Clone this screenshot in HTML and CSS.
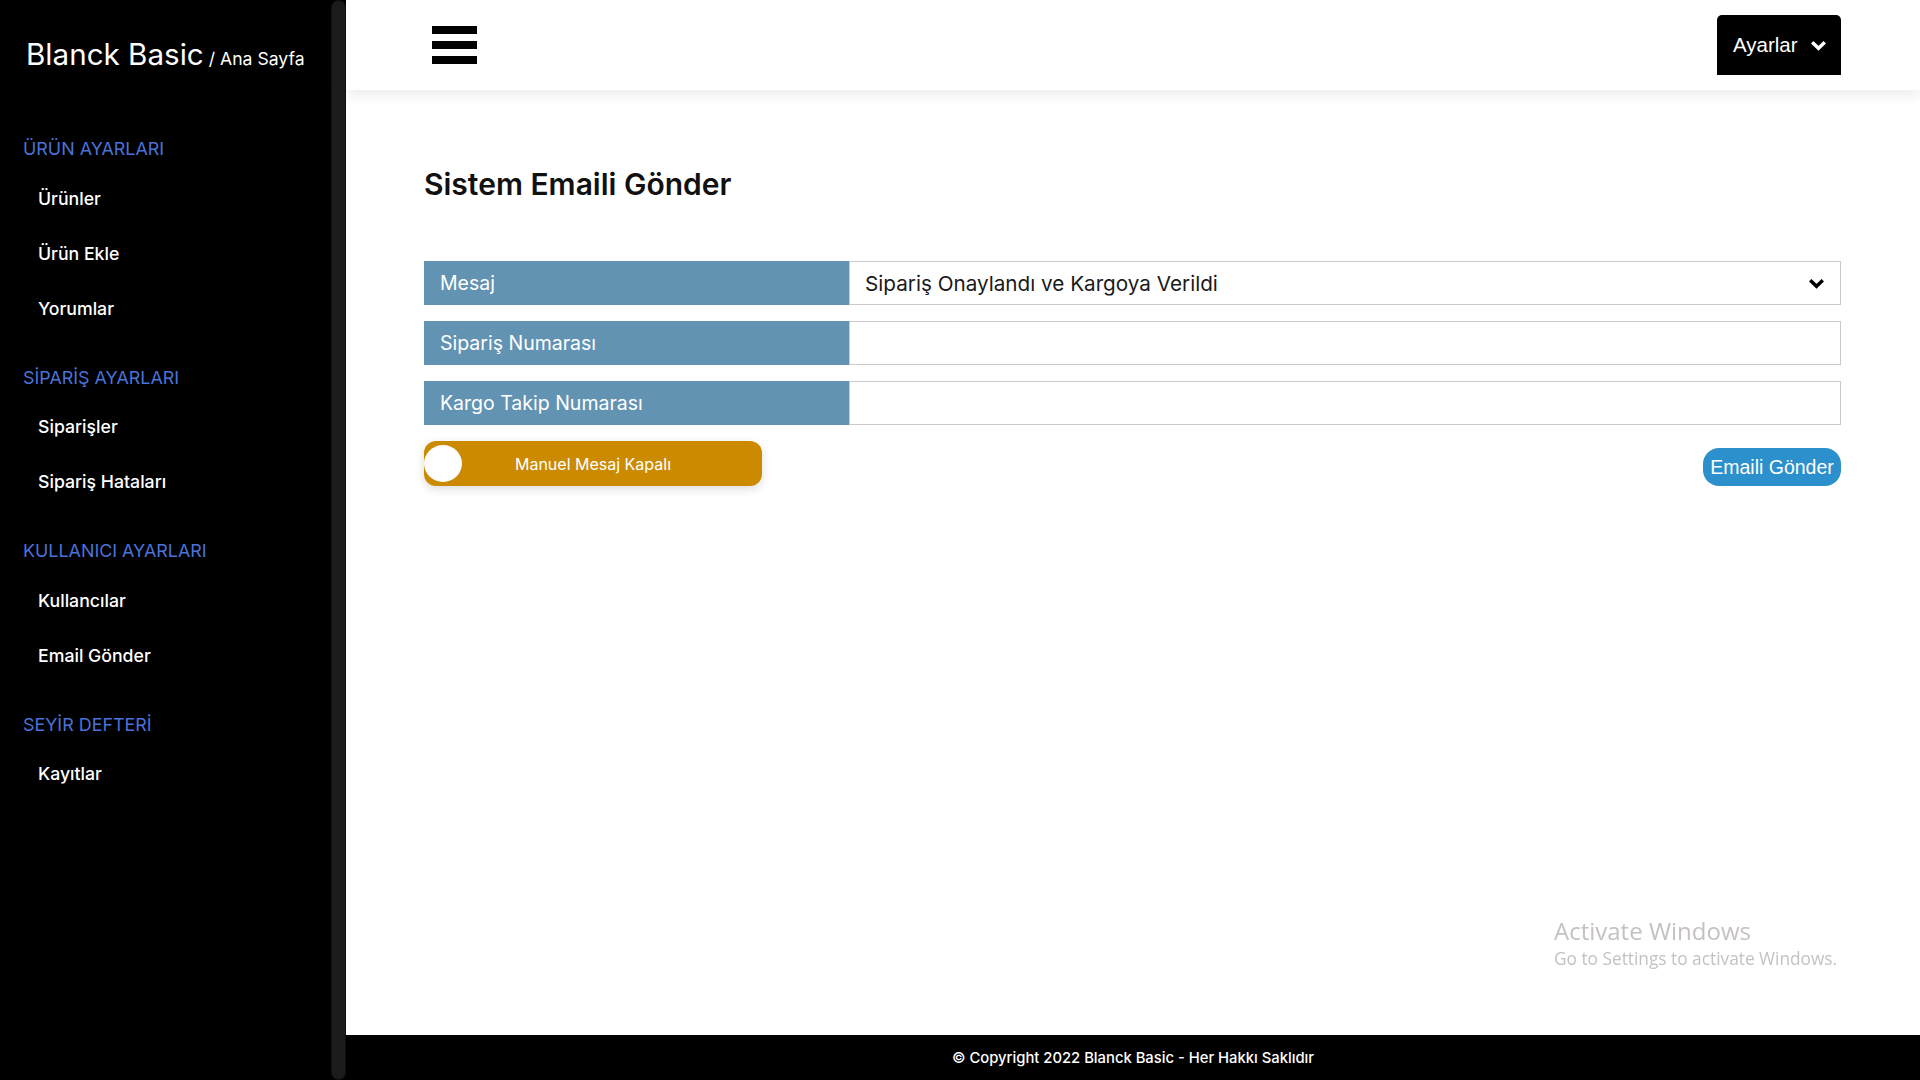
FILE: index.html
```html
<!DOCTYPE html>
<html lang="tr">
<head>
<meta charset="utf-8">
<title>Blanck Basic - Sistem Emaili Gönder</title>
<link rel="stylesheet" href="styles.css">
</head>
<body>
<aside class="sidebar">
  <div class="sidebar-inner">
    <div class="brand"><span class="brand-name">Blanck Basic</span><span class="brand-sub"> / Ana Sayfa</span></div>
    <nav class="nav">
      <div class="nav-section">
        <div class="nav-heading">ÜRÜN AYARLARI</div>
        <a class="nav-item">Ürünler</a>
        <a class="nav-item">Ürün Ekle</a>
        <a class="nav-item">Yorumlar</a>
      </div>
      <div class="nav-section">
        <div class="nav-heading">SİPARİŞ AYARLARI</div>
        <a class="nav-item">Siparişler</a>
        <a class="nav-item">Sipariş Hataları</a>
      </div>
      <div class="nav-section">
        <div class="nav-heading">KULLANICI AYARLARI</div>
        <a class="nav-item">Kullancılar</a>
        <a class="nav-item">Email Gönder</a>
      </div>
      <div class="nav-section">
        <div class="nav-heading">SEYİR DEFTERİ</div>
        <a class="nav-item">Kayıtlar</a>
      </div>
    </nav>
  </div>
  <div class="scroll-track"><div class="scroll-thumb"></div></div>
</aside>
<div class="main">
  <header class="topbar">
    <div class="hamburger"><span></span><span></span><span></span></div>
    <button class="settings-btn">Ayarlar
      <svg class="chev" width="17" height="11" viewBox="0 0 17 11"><path d="M2.2 2.2 L8.5 8.3 L14.8 2.2" fill="none" stroke="#fff" stroke-width="3.4"/></svg>
    </button>
  </header>
  <main class="content">
    <h1 class="title">Sistem Emaili Gönder</h1>
    <div class="form">
      <div class="form-row">
        <div class="form-label">Mesaj</div>
        <div class="form-select">
          <span>Sipariş Onaylandı ve Kargoya Verildi</span>
          <svg class="chev" width="17" height="11" viewBox="0 0 17 11"><path d="M2.2 2.2 L8.5 8.3 L14.8 2.2" fill="none" stroke="#000" stroke-width="3.4"/></svg>
        </div>
      </div>
      <div class="form-row">
        <div class="form-label">Sipariş Numarası</div>
        <input class="form-input" type="text">
      </div>
      <div class="form-row">
        <div class="form-label">Kargo Takip Numarası</div>
        <input class="form-input" type="text">
      </div>
      <div class="actions">
        <div class="toggle"><span class="knob"></span><span class="toggle-text">Manuel Mesaj Kapalı</span></div>
        <button class="send-btn">Emaili Gönder</button>
      </div>
    </div>
  </main>
  <footer class="footer">© Copyright 2022 Blanck Basic - Her Hakkı Saklıdır</footer>
</div>
<div class="activate">
  <div class="activate-title">Activate Windows</div>
  <div class="activate-sub">Go to Settings to activate Windows.</div>
</div>
</body>
</html>
```
FILE: styles.css
```css
* { box-sizing: border-box; }
html, body { margin: 0; padding: 0; height: 100%; }
body {
  display: flex;
  height: 100vh;
  overflow: hidden;
  font-family: Inter, "Noto Sans", sans-serif;
  background: #fff;
  color: #000;
}
.sidebar {
  width: 346px;
  flex-shrink: 0;
  display: flex;
  background: #000;
}
.sidebar-inner {
  width: 331px;
  color: #fff;
}
.scroll-track {
  width: 15px;
  background: #000;
  display: flex;
}
.scroll-thumb {
  flex: 1;
  background: #1e1b1e;
  border: 1px solid #121012;
  border-radius: 8px;
}
.brand {
  padding: 36px 0 0 26px;
  height: 72px;
  line-height: 36px;
  white-space: nowrap;
}
.brand-name { font-size: 29.6px; font-weight: 400; }
.brand-sub { font-size: 17.6px; }
.nav { padding-top: 65px; }
.nav-section + .nav-section { margin-top: 30px; }
.nav-heading {
  height: 24px;
  line-height: 24px;
  padding-left: 23px;
  font-size: 17.9px;
  color: #4a72d9;
  margin-bottom: 9.5px;
}
.nav-item {
  display: block;
  height: 55px;
  line-height: 55px;
  padding-left: 38px;
  font-size: 17.7px;
  font-weight: 500;
  color: #fff;
}
.main {
  flex: 1;
  display: flex;
  flex-direction: column;
  min-width: 0;
  background: #fff;
}
.topbar {
  height: 90px;
  flex-shrink: 0;
  display: flex;
  align-items: center;
  justify-content: space-between;
  padding: 0 79px 0 86px;
  background: #fff;
  box-shadow: 0 4px 14px rgba(0, 0, 0, 0.09);
}
.hamburger {
  display: flex;
  flex-direction: column;
  gap: 7px;
}
.hamburger span {
  display: block;
  width: 45px;
  height: 8px;
  background: #000;
}
.settings-btn {
  height: 60px;
  width: 124px;
  display: flex;
  align-items: center;
  gap: 12px;
  padding: 0 0 0 16px;
  background: #000;
  color: #fff;
  border: none;
  border-radius: 5px 5px 0 0;
  font-family: "Liberation Sans", Arial, sans-serif;
  font-size: 20.5px;
}
.settings-btn .chev { margin-top: 1px; }
.content {
  flex: 1;
  padding: 76px 79px 0 78px;
}
.title {
  margin: 0;
  font-size: 30px;
  line-height: 36px;
  font-weight: 600;
  color: #111;
}
.form {
  margin-top: 59px;
  display: flex;
  flex-direction: column;
  gap: 16px;
}
.form-row {
  display: flex;
  height: 44px;
}
.form-label {
  width: 425px;
  flex-shrink: 0;
  background: #6393b3;
  color: #fff;
  font-size: 19.5px;
  line-height: 44px;
  padding-left: 16px;
}
.form-input, .form-select {
  flex: 1;
  height: 44px;
  border: 1px solid #cdc9c9;
  background: #fff;
  margin: 0;
  font-family: inherit;
  font-size: 20.7px;
}
.form-select {
  display: flex;
  align-items: center;
  justify-content: space-between;
  padding: 0 15px 0 15px;
  color: #1a1a1a;
}
.form-select .chev { margin-top: 1px; }
.actions {
  display: flex;
  align-items: flex-end;
  justify-content: space-between;
}
.toggle {
  width: 338px;
  height: 45px;
  border-radius: 12px;
  background: #cc8a00;
  display: flex;
  align-items: center;
  padding-right: 38px;
  box-shadow: 0 3px 10px rgba(0, 0, 0, 0.14);
}
.knob {
  width: 38px;
  height: 37px;
  border-radius: 50%;
  background: #fff;
  flex-shrink: 0;
}
.toggle-text {
  flex: 1;
  text-align: center;
  color: #fff;
  font-size: 16px;
}
.send-btn {
  height: 38px;
  width: 138px;
  padding: 0;
  border: none;
  border-radius: 16px;
  background: #2b90cc;
  color: #fff;
  font-family: "Liberation Sans", Arial, sans-serif;
  font-size: 19.5px;
}
.footer {
  height: 45px;
  flex-shrink: 0;
  background: #000;
  color: #fff;
  text-align: center;
  line-height: 46px;
  font-size: 14.8px;
  font-weight: 500;
}
.activate {
  position: fixed;
  left: 1554px;
  top: 915px;
  color: #c5c1c1;
  font-family: "Open Sans", "Noto Sans", sans-serif;
  pointer-events: none;
}
.activate-title { font-size: 24px; line-height: 31px; }
.activate-sub { font-size: 17.3px; line-height: 26px; }
```
